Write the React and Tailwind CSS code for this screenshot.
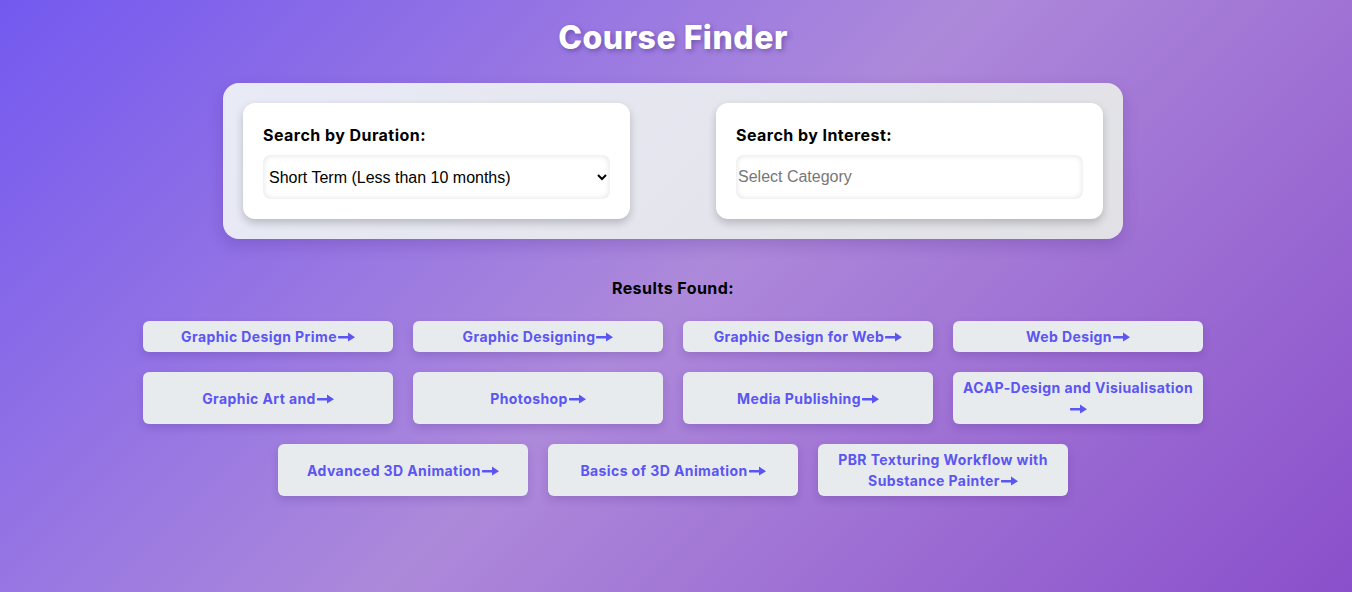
import React, { useState } from "react";

const courses = [
  ["Graphic Design Prime"],
  ["Graphic Designing"],
  ["Graphic Design for Web"],
  ["Web Design"],
  ["Graphic Art and"],
  ["Photoshop"],
  ["Media Publishing"],
  ["ACAP-Design and Visiualisation", true],
  ["Advanced 3D Animation"],
  ["Basics of 3D Animation"],
  ["PBR Texturing Workflow with", "Substance Painter"],
];

const Arrow = () => (
  <svg
    width="17"
    height="10"
    viewBox="0 0 17 10"
    className="ml-px inline-block align-[0px]"
    fill="currentColor"
  >
    <rect x="0" y="4" width="11" height="2.4" rx="0.6" />
    <path d="M10 0.6 L17 5.2 L10 9.6 Z" />
  </svg>
);

const CourseButton = ({ item }) => {
  const [name, second] = item;
  return (
    <button
      type="button"
      className="w-[250px] rounded-md bg-[#e8ebee] px-2.5 py-[5px] text-center text-sm leading-[21px] font-bold tracking-[0.4px] text-[#5b55f2] shadow-[0_4px_8px_rgba(60,20,120,0.18)]"
    >
      {second === true ? (
        <>
          <span className="whitespace-nowrap">{name}</span>
          <br />
          <Arrow />
        </>
      ) : second ? (
        <>
          {name}
          <br />
          {second}
          <Arrow />
        </>
      ) : (
        <>
          {name}
          <Arrow />
        </>
      )}
    </button>
  );
};

export default function App() {
  const [duration, setDuration] = useState("short");

  return (
    <div className="min-h-screen bg-[linear-gradient(135deg,#7459f0_0%,#ad89da_50%,#8a4fcb_100%)] pr-[6px] font-['Inter','Noto_Sans',sans-serif]">
      <div className="flex flex-col items-center pt-[18px]">
        <h1 className="text-[32px] leading-[40px] font-extrabold tracking-[0.5px] text-white [text-shadow:2px_2px_5px_rgba(40,10,90,0.35)]">
          Course Finder
        </h1>

        <div className="mt-[25px] flex w-[900px] justify-between rounded-2xl bg-[linear-gradient(135deg,#e8eaf6,#e1e1e5)] p-5 shadow-[0_6px_16px_rgba(60,20,120,0.2)]">
          <div className="w-[387px] rounded-xl bg-white p-5 shadow-[0_4px_8px_rgba(0,0,0,0.2)]">
            <label className="block text-base leading-6 font-bold tracking-[0.45px] text-black">Search by Duration:</label>
            <select
              value={duration}
              onChange={(e) => setDuration(e.target.value)}
              className="mt-2 h-11 w-full rounded-lg border-0 bg-white pr-1 pl-0.5 font-['Liberation_Sans',Arial,sans-serif] text-base text-black shadow-[inset_0_0_6px_rgba(0,0,0,0.12)] outline-none"
            >
              <option value="short">Short Term (Less than 10 months)</option>
              <option value="long">Long Term (More than 10 months)</option>
            </select>
          </div>

          <div className="w-[387px] rounded-xl bg-white p-5 shadow-[0_4px_8px_rgba(0,0,0,0.2)]">
            <label className="block text-base leading-6 font-bold tracking-[0.45px] text-black">Search by Interest:</label>
            <input
              type="text"
              placeholder="Select Category"
              className="mt-2 h-11 w-full rounded-lg border-0 bg-white px-0.5 font-['Liberation_Sans',Arial,sans-serif] text-base text-black shadow-[inset_0_0_6px_rgba(0,0,0,0.12)] outline-none placeholder:text-[#777]"
            />
          </div>
        </div>

        <h2 className="mt-[37px] text-base leading-6 font-bold tracking-[0.45px] text-black">Results Found:</h2>

        <div className="mt-[21px] flex w-[1080px] flex-wrap justify-center gap-x-5 gap-y-5">
          {courses.map((c) => (
            <CourseButton key={c[0]} item={c} />
          ))}
        </div>
      </div>
    </div>
  );
}
